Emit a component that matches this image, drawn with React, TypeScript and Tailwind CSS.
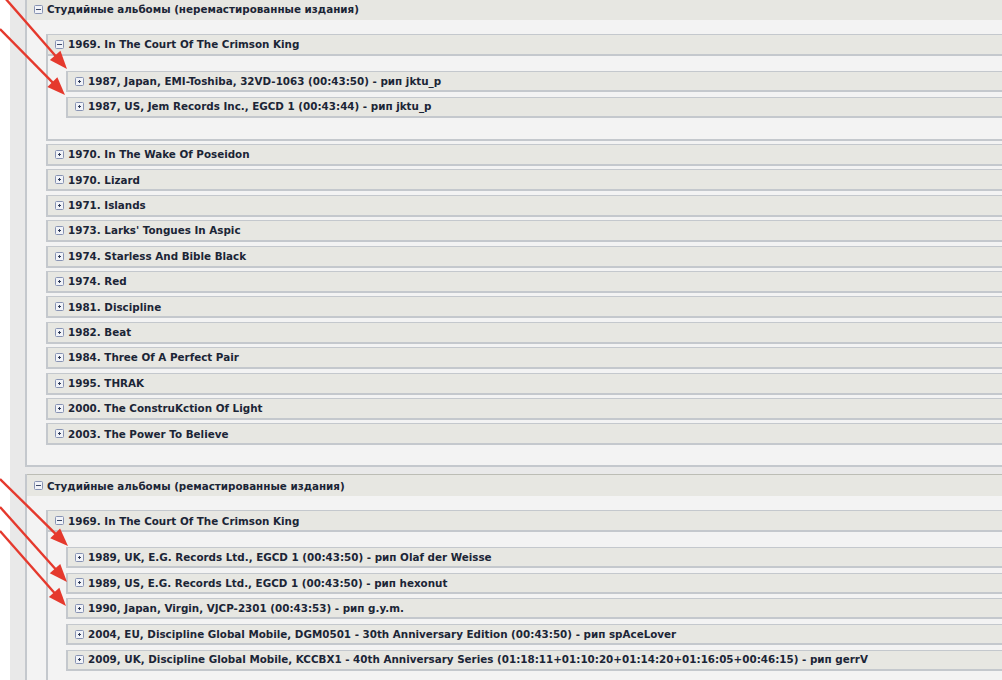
import React from "react";

type Release = string;

interface Album {
  title: string;
  open?: boolean;
  releases?: Release[];
}

interface SectionData {
  title: string;
  albums: Album[];
}

const sections: SectionData[] = [
  {
    title: "Студийные альбомы (неремастированные издания)",
    albums: [
      {
        title: "1969. In The Court Of The Crimson King",
        open: true,
        releases: [
          "1987, Japan, EMI-Toshiba, 32VD-1063 (00:43:50) - рип jktu_p",
          "1987, US, Jem Records Inc., EGCD 1 (00:43:44) - рип jktu_p",
        ],
      },
      { title: "1970. In The Wake Of Poseidon" },
      { title: "1970. Lizard" },
      { title: "1971. Islands" },
      { title: "1973. Larks' Tongues In Aspic" },
      { title: "1974. Starless And Bible Black" },
      { title: "1974. Red" },
      { title: "1981. Discipline" },
      { title: "1982. Beat" },
      { title: "1984. Three Of A Perfect Pair" },
      { title: "1995. THRAK" },
      { title: "2000. The ConstruKction Of Light" },
      { title: "2003. The Power To Believe" },
    ],
  },
  {
    title: "Студийные альбомы (ремастированные издания)",
    albums: [
      {
        title: "1969. In The Court Of The Crimson King",
        open: true,
        releases: [
          "1989, UK, E.G. Records Ltd., EGCD 1 (00:43:50) - рип Olaf der Weisse",
          "1989, US, E.G. Records Ltd., EGCD 1 (00:43:50) - рип hexonut",
          "1990, Japan, Virgin, VJCP-2301 (00:43:53) - рип g.y.m.",
          "2004, EU, Discipline Global Mobile, DGM0501 - 30th Anniversary Edition (00:43:50) - рип spAceLover",
          "2009, UK, Discipline Global Mobile, KCCBX1 - 40th Anniversary Series (01:18:11+01:10:20+01:14:20+01:16:05+00:46:15) - рип gerrV",
        ],
      },
    ],
  },
];

// little tree toggle, minus when open, dot-plus when closed
const Toggle = ({ open }: { open: boolean }) => (
  <svg width="9" height="9" viewBox="0 0 9 9" className="shrink-0">
    <rect x="0.5" y="0.5" width="8" height="8" rx="1" fill="#f1f3f8" stroke="#8793b3" />
    {open ? (
      <rect x="2" y="4" width="5" height="1" fill="#3c4868" />
    ) : (
      <>
        <rect x="3" y="4" width="3" height="1" fill="#2e3a58" />
        <rect x="4" y="3" width="1" height="3" fill="#2e3a58" />
      </>
    )}
  </svg>
);

const Bar = ({ open, label, className }: { open: boolean; label: string; className: string }) => (
  <div className={`flex items-center gap-[4px] bg-[#e7e7e2] pl-[7px] whitespace-nowrap ${className}`}>
    <Toggle open={open} />
    <span className="pt-[1px]">{label}</span>
  </div>
);

const AlbumBlock = ({ album }: { album: Album }) => (
  <div className="flex flex-col">
    <Bar
      open={!!album.open}
      label={album.title}
      className="h-[22px] border-t border-l-2 border-b-2 border-[#c4c8cd]"
    />
    {album.open && (
      <div className="flex flex-col gap-[4.6px] border-l-2 border-b-2 border-[#c4c8cd] bg-[#f3f3f3] pt-[15px] pb-[21px] pl-[18px]">
        {album.releases?.map((r) => (
          <Bar
            key={r}
            open={false}
            label={r}
            className="h-[21px] border-t border-l-2 border-b-2 border-[#c4c8cd] pl-[6px]"
          />
        ))}
      </div>
    )}
  </div>
);

const Section = ({ data }: { data: SectionData }) => (
  <div className="flex flex-col border-l-2 border-b-2 border-[#c4c8cd] bg-[#f3f3f3]">
    <Bar open label={data.title} className="h-[22px] border-t border-[#bcbdb5] border-b-[#c4c8cd]" />
    <div className="flex flex-col gap-[3.4px] pt-[14px] pb-[20px] pl-[19px]">
      {data.albums.map((a) => (
        <AlbumBlock key={a.title} album={a} />
      ))}
    </div>
  </div>
);

const arrows = [
  { x1: 5, y1: -2, x2: 67, y2: 69 },
  { x1: 0, y1: 29, x2: 65, y2: 95 },
  { x1: 0, y1: 479, x2: 68, y2: 546 },
  { x1: 0, y1: 507, x2: 67, y2: 582 },
  { x1: 0, y1: 531, x2: 66, y2: 606 },
];

const Arrow = ({ x1, y1, x2, y2 }: { x1: number; y1: number; x2: number; y2: number }) => {
  const dx = x2 - x1;
  const dy = y2 - y1;
  const len = Math.hypot(dx, dy);
  const ux = dx / len;
  const uy = dy / len;
  const headLen = 18;
  const headW = 7;
  const bx = x2 - ux * headLen;
  const by = y2 - uy * headLen;
  const pts = `${x2},${y2} ${bx - uy * headW},${by + ux * headW} ${bx + uy * headW},${by - ux * headW}`;
  return (
    <g>
      <line x1={x1} y1={y1} x2={bx + ux * 2} y2={by + uy * 2} stroke="#e5392d" strokeWidth="2.4" />
      <polygon points={pts} fill="#e5392d" />
    </g>
  );
};

export default function App() {
  return (
    <div
      className="relative h-[680px] w-[1002px] overflow-hidden bg-white text-[10.35px] font-bold text-[#1b2536]"
      style={{ fontFamily: '"DejaVu Sans", Verdana, sans-serif' }}
    >
      <div className="ml-[10px] -mt-[2px] flex w-[1200px] flex-col gap-[7px] bg-[#e9e9e9] pl-[15px]">
        {sections.map((s) => (
          <Section key={s.title} data={s} />
        ))}
      </div>
      <svg className="pointer-events-none absolute left-0 top-0" width="1002" height="680">
        {arrows.map((a, i) => (
          <Arrow key={i} {...a} />
        ))}
      </svg>
    </div>
  );
}
